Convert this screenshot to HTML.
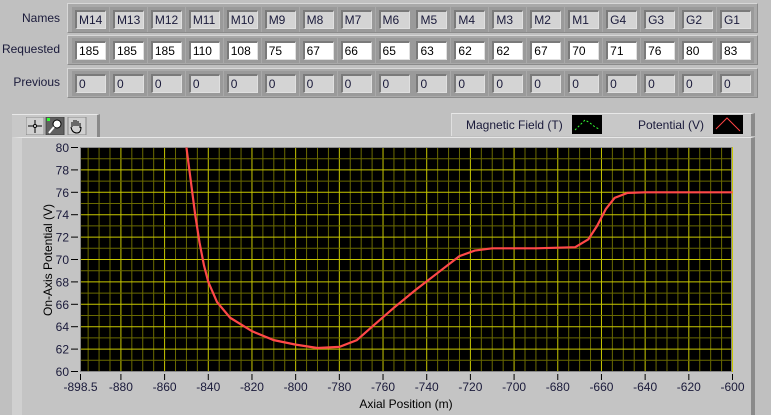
<!DOCTYPE html>
<html><head><meta charset="utf-8"><style>
body{margin:0;width:771px;height:415px;background:#c0c0c0;font-family:"Liberation Sans",sans-serif;position:relative;overflow:hidden}
.lbl{position:absolute;font-size:12px;color:#1a1a3a;text-align:right;width:60px;left:0}
.band{position:absolute;left:67px;width:691px;height:30px;background:#a9a9a9;border-top:1px solid #d8d8d8;border-left:1px solid #d8d8d8;border-bottom:1px solid #8a8a8a;border-right:1px solid #8a8a8a;box-sizing:border-box}
.cell{position:absolute;width:31px;height:19px;box-sizing:border-box;border-top:2px solid #7a7a7a;border-left:2px solid #7a7a7a;border-bottom:1px solid #e0e0e0;border-right:1px solid #e0e0e0;font-size:12px;line-height:17px;padding-left:2px;color:#1a1a3a;background:#d4d4d4;outline:3px solid #9a9a9a}
.w{background:#fff;color:#000}
</style></head><body>
<div class="lbl" style="top:11px">Names</div>
<div class="lbl" style="top:42px">Requested</div>
<div class="lbl" style="top:75px">Previous</div>
<div class="band" style="top:3px"></div>
<div class="band" style="top:35px"></div>
<div class="band" style="top:68px"></div>
<div id="cells"></div>
<!-- toolbar -->
<div style="position:absolute;left:12px;top:114px;width:88px;height:24px;background:#c8c8c8;border-top:1px solid #e8e8e8;border-right:3px solid #8a8a8a;box-sizing:border-box"></div>
<svg style="position:absolute;left:26px;top:117px" width="62" height="18">
<rect x="0" y="0" width="18" height="18" fill="#d0d0d0" stroke="#888"/>
<line x1="9" y1="3" x2="9" y2="16" stroke="#000"/><line x1="2" y1="9" x2="16" y2="9" stroke="#000"/><circle cx="9" cy="9" r="1.5" fill="#fff" stroke="#000"/>
<rect x="20" y="0" width="18" height="18" fill="#606060" stroke="#444"/>
<circle cx="31" cy="7" r="4" fill="#fff" stroke="#000"/><line x1="28" y1="10" x2="23" y2="16" stroke="#fff" stroke-width="2"/><rect x="21" y="1" width="3" height="3" fill="#3f3"/>
<rect x="42" y="0" width="18" height="18" fill="#d0d0d0" stroke="#888"/>
<path d="M46 10 L46 5 M48 9 L48 3 M50 9 L50 3 M52 9 L52 4 M54 11 L54 6 M45 10 Q46 16 51 16 Q55 16 55 10" stroke="#000" fill="none"/>
</svg>
<!-- legend -->
<div style="position:absolute;left:451px;top:113px;width:304px;height:23px;background:#c8c8c8;border-top:1px solid #e8e8e8;border-left:1px solid #e0e0e0;border-right:4px solid #8a8a8a;box-sizing:border-box;font-size:12px;color:#1a1a3a">
<span style="position:absolute;left:14px;top:4px">Magnetic Field (T)</span>
<span style="position:absolute;left:186px;top:4px">Potential (V)</span>
</div>
<svg style="position:absolute;left:572px;top:115px" width="30" height="19"><rect width="30" height="19" fill="#000"/><polyline points="3,15 8,10 13,5 18,8 23,12 27,14" stroke="#3f3" stroke-dasharray="2 2" fill="none"/></svg>
<svg style="position:absolute;left:713px;top:115px" width="30" height="19"><rect width="30" height="19" fill="#000"/><polyline points="3,14 14,3 27,16" stroke="#f44" fill="none"/></svg>
<!-- panel -->
<div style="position:absolute;left:12px;top:137px;width:743px;height:278px;background:#c4c4c4;border-top:1px solid #e8e8e8;border-left:10px solid #d0d0d0;border-right:4px solid #8a8a8a;box-sizing:border-box"></div>
<svg id="plot" style="position:absolute;left:0;top:0" width="771" height="415"></svg>
<script>
var h='',names=['M14','M13','M12','M11','M10','M9','M8','M7','M6','M5','M4','M3','M2','M1','G4','G3','G2','G1'],
req=[185,185,185,110,108,75,67,66,65,63,62,62,67,70,71,76,80,83];
for(var i=0;i<18;i++){var x=75+i*37.94;
h+='<div class="cell" style="left:'+x+'px;top:10px">'+names[i]+'</div>';
h+='<div class="cell w" style="left:'+x+'px;top:41px">'+req[i]+'</div>';
h+='<div class="cell" style="left:'+x+'px;top:74px">0</div>';}
document.getElementById('cells').innerHTML=h;
function fx(x){return 80.5+(x+898.5)*2.1843}
function fy(y){return 147.5+(80-y)*11.2}
var s='<rect x="80" y="147" width="652" height="225" fill="#000"/>';
for(var x=-895;x<=-600;x+=5){var p=fx(x);s+='<line x1="'+p+'" y1="147" x2="'+p+'" y2="372" stroke="'+(x%20==0?'#c8c800':'#6a6a00')+'" stroke-width="1"/>'}
for(var y=61;y<80;y++){var q=fy(y);s+='<line x1="80" y1="'+q+'" x2="732" y2="'+q+'" stroke="'+(y%2==0?'#c8c800':'#6a6a00')+'"/>'}
s+='<rect x="80.5" y="147.5" width="651" height="224" fill="none" stroke="#888"/>';
for(var y=60;y<=80;y+=2){var q=fy(y);s+='<line x1="71" y1="'+q+'" x2="78" y2="'+q+'" stroke="#000"/><text x="69" y="'+(q+4.5)+'" font-size="12" text-anchor="end" fill="#1a1a3a">'+y+'</text>'}
var xs=[-898.5,-880,-860,-840,-820,-800,-780,-760,-740,-720,-700,-680,-660,-640,-620,-600];
xs.forEach(function(x){var p=fx(x);s+='<line x1="'+p+'" y1="374" x2="'+p+'" y2="380" stroke="#000"/><text x="'+p+'" y="391" font-size="12" text-anchor="middle" fill="#1a1a3a">'+x+'</text>'});
s+='<text x="406" y="408" font-size="12" text-anchor="middle" fill="#000">Axial Position (m)</text>';
s+='<text transform="translate(52,260) rotate(-90)" font-size="12" text-anchor="middle" fill="#000">On-Axis Potential (V)</text>';
var d=[[-850,80],[-848,77],[-846,74],[-844,71.5],[-842,69.5],[-840,68],[-836,66.2],[-830,64.8],[-820,63.6],[-810,62.8],[-800,62.4],[-790,62.1],[-780,62.2],[-772,62.8],[-765,64],[-755,65.7],[-745,67.3],[-735,68.8],[-725,70.3],[-718,70.8],[-710,71],[-690,71],[-672,71.1],[-666,71.8],[-662,73],[-658,74.5],[-654,75.5],[-648,75.95],[-640,76],[-600,76]];
s+='<polyline fill="none" stroke="#ff4848" stroke-width="2.2" points="'+d.map(function(a){return fx(a[0])+','+fy(a[1])}).join(' ')+'"/>';
document.getElementById('plot').innerHTML=s;
</script>
</body></html>
